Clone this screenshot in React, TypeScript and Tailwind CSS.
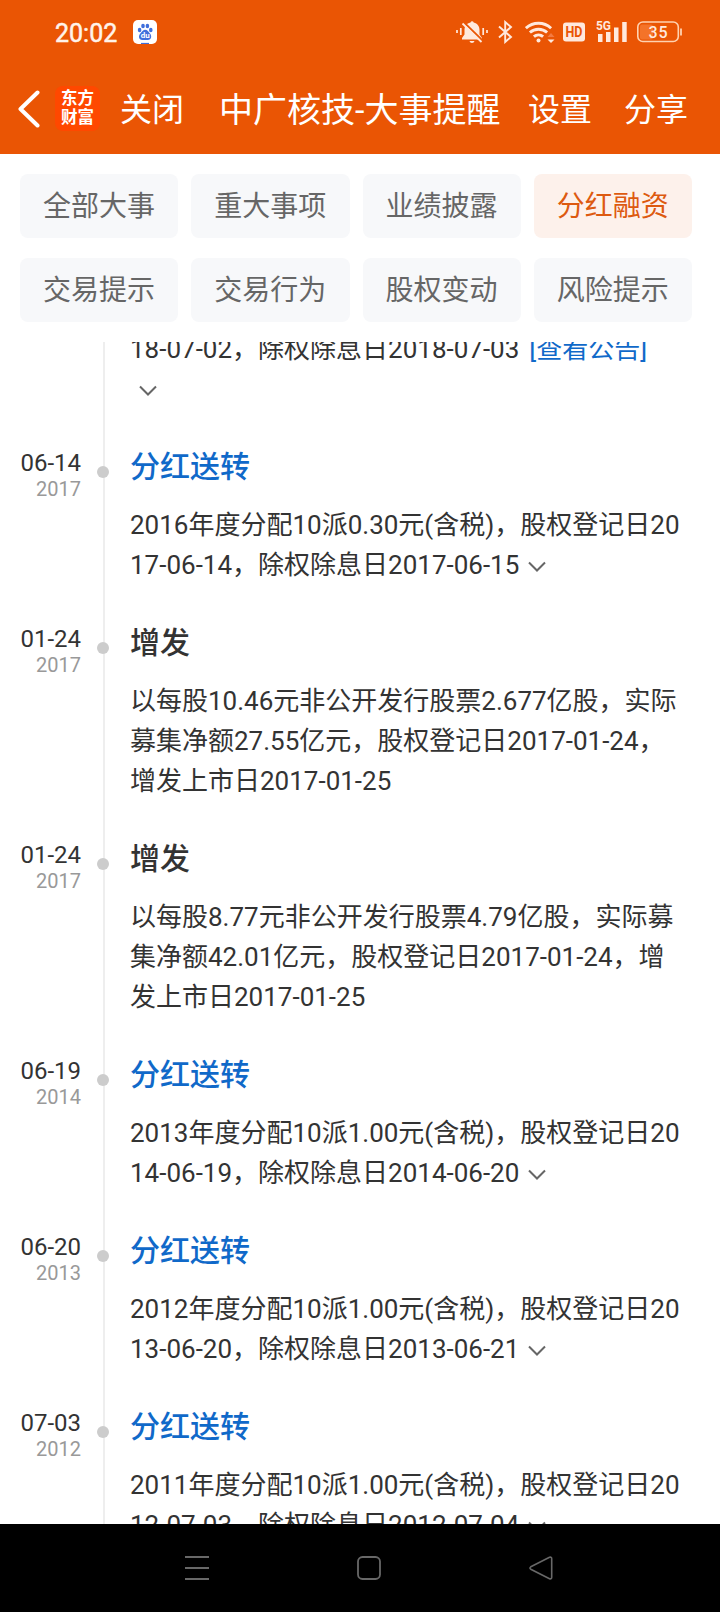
import clsx from "clsx";

type Tab = { label: string; active?: boolean };

type Entry = {
  date: string;
  year: string;
  title: string;
  link?: boolean;
  lines: string[];
  expandable?: boolean;
};

const tabs: Tab[] = [
  { label: "全部大事" },
  { label: "重大事项" },
  { label: "业绩披露" },
  { label: "分红融资", active: true },
  { label: "交易提示" },
  { label: "交易行为" },
  { label: "股权变动" },
  { label: "风险提示" },
];

const entries: Entry[] = [
  {
    date: "06-14",
    year: "2017",
    title: "分红送转",
    link: true,
    lines: ["2016年度分配10派0.30元(含税)，股权登记日20", "17-06-14，除权除息日2017-06-15"],
    expandable: true,
  },
  {
    date: "01-24",
    year: "2017",
    title: "增发",
    lines: [
      "以每股10.46元非公开发行股票2.677亿股，实际",
      "募集净额27.55亿元，股权登记日2017-01-24，",
      "增发上市日2017-01-25",
    ],
  },
  {
    date: "01-24",
    year: "2017",
    title: "增发",
    lines: [
      "以每股8.77元非公开发行股票4.79亿股，实际募",
      "集净额42.01亿元，股权登记日2017-01-24，增",
      "发上市日2017-01-25",
    ],
  },
  {
    date: "06-19",
    year: "2014",
    title: "分红送转",
    link: true,
    lines: ["2013年度分配10派1.00元(含税)，股权登记日20", "14-06-19，除权除息日2014-06-20"],
    expandable: true,
  },
  {
    date: "06-20",
    year: "2013",
    title: "分红送转",
    link: true,
    lines: ["2012年度分配10派1.00元(含税)，股权登记日20", "13-06-20，除权除息日2013-06-21"],
    expandable: true,
  },
  {
    date: "07-03",
    year: "2012",
    title: "分红送转",
    link: true,
    lines: ["2011年度分配10派1.00元(含税)，股权登记日20", "12-07-03，除权除息日2012-07-04"],
    expandable: true,
  },
];

function Chevron() {
  return (
    <svg className="ml-2 inline-block align-[1px]" width="20" height="12" viewBox="0 0 20 12" fill="none">
      <path d="M2 1.5 10 9.5 18 1.5" stroke="#666" strokeWidth="2" />
    </svg>
  );
}

function StatusBar() {
  return (
    <div className="flex h-16 items-center pl-[55px] pr-[38px] text-[#ffe9dd]">
      <span className="w-[63px] pt-0.5 text-[25px] leading-none text-[#fff3ea] [-webkit-text-stroke:0.5px_#fff3ea]">20:02</span>
      {/* Baidu notification */}
      <svg className="ml-[15px]" width="24" height="24" viewBox="0 0 24 24">
        <rect width="24" height="24" rx="5" fill="#fff" />
        <g fill="#3f6fdc">
          <ellipse cx="6.6" cy="10" rx="1.8" ry="2.2" />
          <ellipse cx="10" cy="6" rx="1.8" ry="2.3" />
          <ellipse cx="14.4" cy="6" rx="1.8" ry="2.3" />
          <ellipse cx="17.8" cy="10" rx="1.8" ry="2.2" />
          <path d="M12.2 9.8c2 0 3 1.8 4.3 3.2 3 2.8 1.8 7-1.6 7H9.3c-3.6 0-4.4-4.4-1.5-7 1.5-1.4 2.4-3.2 4.4-3.2Z" />
          <rect x="8" y="22.9" width="8" height="1.1" />
        </g>
        <text x="12.2" y="18.3" fontSize="8" fontWeight="700" textAnchor="middle" fill="#fff">du</text>
      </svg>
      <div className="ml-auto flex items-center">
        {/* muted bell */}
        <svg width="32" height="24" viewBox="0 0 32 24" fill="currentColor">
          <path d="M14.5 2.500a1.700 1.700 0 0 1 3.200 0c3.800.9 5.800 3.700 5.800 7.500v4.500l2.500 3.500v1.500H6V18l2.500-3.500V10c0-3.800 2-6.600 6-7.500ZM13.500 21h5c-.4 1.300-1.200 2-2.500 2s-2.100-.7-2.500-2Z" />
          <path d="M8 2.500 27 21" stroke="#ea5504" strokeWidth="2" />
          <path d="M6.500 3.500 25.500 22" stroke="currentColor" strokeWidth="1.800" />
          <path d="M1 10v3M4.800 8v7M27.200 8v7M31 10v3" stroke="currentColor" strokeWidth="1.700" />
        </svg>
        <svg className="ml-2.5" width="15" height="24" viewBox="0 0 15 24" fill="none" stroke="currentColor" strokeWidth="1.900">
          <path d="M1 6.500 13 17 7.200 22V2L13 7 1 17.500" />
        </svg>
        <svg className="ml-3" width="30" height="24" viewBox="0 0 30 24" fill="none" stroke="currentColor" strokeWidth="2.900">
          <path d="M.9 8.200a18.500 18.500 0 0 1 25.200 0M4.900 12.500a12.800 12.800 0 0 1 17.200 0M8.900 16.700a7 7 0 0 1 9.200 0" />
          <circle cx="13.500" cy="20.500" r="2" fill="currentColor" stroke="none" />
          <path d="m22.500 17 3.500-4 3.500 4Z" fill="#f47b42" stroke="none" />
          <path d="m22.500 19.500 3.500 3.500 3.500-3.500Z" fill="currentColor" stroke="none" />
        </svg>
        <svg className="ml-2" width="22" height="20" viewBox="0 0 22 20">
          <rect y=".5" width="22" height="19" rx="3" fill="currentColor" />
          <text x="11" y="15" fontSize="14.500" fontWeight="700" textAnchor="middle" textLength="17" lengthAdjust="spacingAndGlyphs" fill="#ea5504">HD</text>
        </svg>
        <svg className="ml-[11px]" width="31" height="24" viewBox="0 0 31 24" fill="currentColor">
          <path d="M2 14h4.500v8H2ZM10 12h4.500v10H10ZM18 7.500h4.500V22H18ZM26.200 2h4.500v20h-4.500Z" />
          <text x="0" y="10" fontSize="13" fontWeight="700" textLength="15" lengthAdjust="spacingAndGlyphs">5G</text>
        </svg>
        <svg className="ml-2.5" width="45" height="22" viewBox="0 0 45 22" fill="none">
          <rect x="3" y="3.500" width="13" height="15" rx="2" fill="#f47329" />
          <rect x=".8" y="1" width="40.500" height="19.500" rx="5" stroke="#ffd2b0" strokeWidth="1.600" />
          <path d="M44 7.500v7" stroke="#ffd2b0" strokeWidth="1.800" />
          <text x="21.500" y="16.500" fontSize="16" fontWeight="500" textAnchor="middle" letterSpacing="1" fill="currentColor">35</text>
        </svg>
      </div>
    </div>
  );
}

function TitleBar() {
  return (
    <div className="flex h-[90px] items-center pl-[17px] text-[32px] leading-none text-white">
      <svg className="-mt-px" width="23" height="38" viewBox="0 0 23 38" fill="none">
        <path d="M20.500 2.500 3.500 19 20.500 35.500" stroke="#fff" strokeWidth="4" strokeLinecap="round" strokeLinejoin="round" />
      </svg>
      <div className="-mt-0.5 ml-[15px] flex h-[45px] w-[45px] flex-col items-center justify-center rounded-lg bg-[#ff4800] text-[16.500px] font-bold leading-[19.500px]">
        <span>东方</span>
        <span>财富</span>
      </div>
      <span className="ml-5 whitespace-nowrap pt-0.5">关闭</span>
      <h1 className="ml-[35px] w-[281px] whitespace-nowrap pt-0.5 text-[34px]">中广核技-大事提醒</h1>
      <span className="ml-7 whitespace-nowrap pt-0.5">设置</span>
      <span className="ml-8 whitespace-nowrap pt-0.5">分享</span>
    </div>
  );
}

function TimelineEntry({ entry }: { entry: Entry }) {
  return (
    <div className="flex">
      <div className="w-[81px] shrink-0 pt-0.5 text-right">
        <div className="text-[24px] leading-[28px] text-[#333]">{entry.date}</div>
        <div className="text-[20px] leading-6 text-[#999]">{entry.year}</div>
      </div>
      <div className="ml-4 mt-[19px] h-3 w-3 shrink-0 rounded-full bg-[#ccc]" />
      <div className="ml-[21px] whitespace-nowrap pb-[38px]">
        <h2 className={clsx("mb-[18px] text-[30px] font-medium leading-10", entry.link ? "text-[#1069c9]" : "text-[#333]")}>
          {entry.title}
        </h2>
        {entry.lines.map((line, i) => (
          <p key={line} className="h-10 text-[26px] leading-10 text-[#333]">
            {line}
            {entry.expandable && i === entry.lines.length - 1 && <Chevron />}
          </p>
        ))}
      </div>
    </div>
  );
}

function NavBar() {
  return (
    <div className="flex h-[88px] shrink-0 items-center bg-black pl-[185px]">
      <svg width="24" height="26" viewBox="0 0 24 26" stroke="#686868" strokeWidth="2">
        <path d="M0 2h24M0 13h24M0 24h24" />
      </svg>
      <svg className="ml-[148px]" width="24" height="24" viewBox="0 0 24 24" fill="none" stroke="#686868" strokeWidth="1.800">
        <rect x="1" y="1" width="22" height="22" rx="4.500" />
      </svg>
      <svg className="ml-[148px]" width="24" height="24" viewBox="0 0 24 24" fill="none" stroke="#686868" strokeWidth="1.600">
        <path d="M1.800 10.800 20.500 1.300q2.200-.7 2.200 1.500v18.400q0 2.200-2.200 1.500L1.800 13.200q-1.700-1.200 0-2.400Z" />
      </svg>
    </div>
  );
}

export default function App() {
  return (
    <div className="flex h-[1612px] w-[720px] flex-col overflow-hidden bg-white font-[Roboto,'Noto_Sans_CJK_SC',sans-serif]" lang="zh-CN">
      <header className="h-[154px] shrink-0 bg-[#ea5504]">
        <StatusBar />
        <TitleBar />
      </header>

      <nav className="grid shrink-0 grid-cols-4 gap-x-[13px] gap-y-5 px-5 py-5 pr-7">
        {tabs.map((tab) => (
          <button
            key={tab.label}
            className={clsx(
              "h-16 rounded-lg pt-0.5 text-[28px] leading-none",
              tab.active ? "bg-[#fdf1eb] text-[#dd5a10]" : "bg-[#f7f8fa] text-[#666]"
            )}
          >
            {tab.label}
          </button>
        ))}
      </nav>

      <main className="relative min-h-0 flex-1 overflow-hidden">
        {/* timeline rail, behind the dots */}
        <div className="absolute inset-y-0 left-[103px] w-0.5 bg-[#eee]" />
        <div className="relative -mt-[13px]">
          {/* tail of the entry scrolled under the tabs */}
          <div className="pb-[38px] pl-[130px] text-[26px] leading-10 text-[#333]">
            <p className="h-10 whitespace-nowrap">
              18-07-02，除权除息日2018-07-03<span className="ml-2.5 text-[#1069c9]">[查看公告]</span>
            </p>
            <p className="h-10">
              <Chevron />
            </p>
          </div>
          {entries.map((entry) => (
            <TimelineEntry key={entry.date + entry.lines[0]} entry={entry} />
          ))}
        </div>
      </main>

      <NavBar />
    </div>
  );
}
